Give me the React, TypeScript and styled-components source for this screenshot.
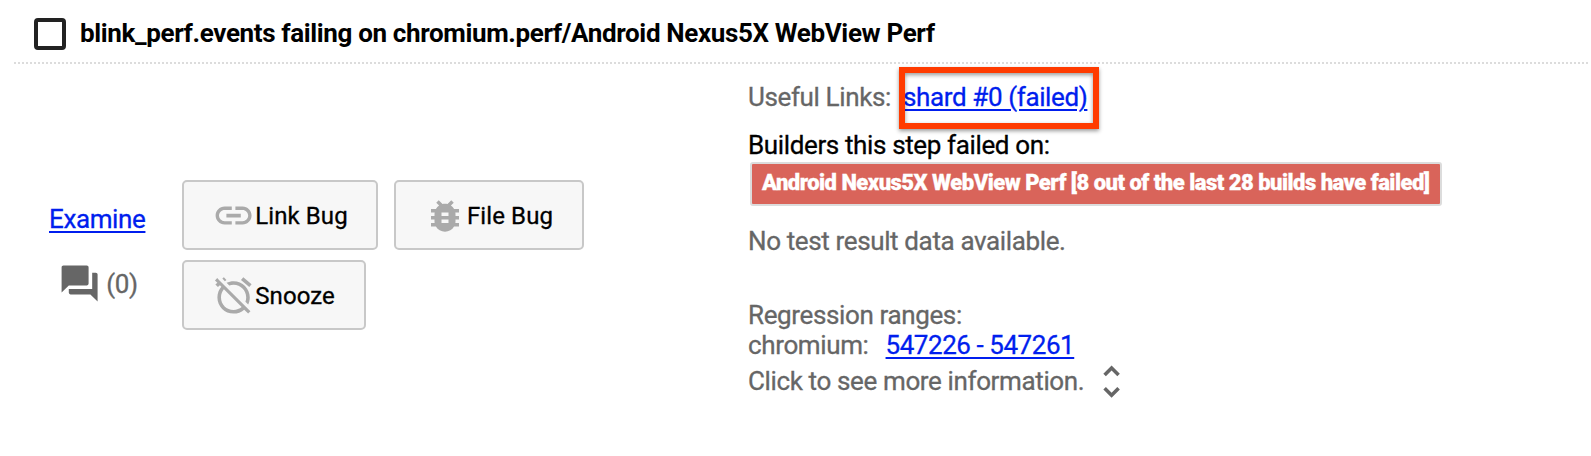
import React from "react";
import styled, { createGlobalStyle } from "styled-components";

const GlobalStyle = createGlobalStyle`
  *, *::before, *::after { box-sizing: border-box; }
  body {
    margin: 0;
    background: #fff;
    color: #666;
    font: 26px/30px Roboto, sans-serif;
    letter-spacing: -0.37px;
    -webkit-text-stroke: 0.3px currentColor;
    overflow: hidden;
  }
`;

const Page = styled.main`
  height: 456px;
  padding-left: 14px;
`;

const Header = styled.header`
  display: flex;
  align-items: flex-start;
  height: 64px;
  width: 1574px;
  padding: 18px 0 0 20px;
  background: repeating-linear-gradient(90deg, #dcdcdc 0 2px, transparent 2px 4px) 0 100% / 100% 2px no-repeat;
`;

const Checkbox = styled.span`
  width: 32px;
  height: 32px;
  border: 4px solid #222;
  border-radius: 4px;
`;

const Title = styled.h1`
  margin: 0 0 0 14px;
  font-size: 26px;
  line-height: 30px;
  font-weight: 700;
  color: #000;
  white-space: nowrap;
  letter-spacing: -0.36px;
  -webkit-text-stroke: 0;
`;

const Body = styled.div`
  display: grid;
  grid-template-columns: 168px 566px 1fr;
  align-items: start;
`;

const Summary = styled.div`
  padding: 140px 0 0 35px;
`;

const Link = styled.a<{ $spacing?: number }>`
  color: #001eee;
  letter-spacing: ${(p) => p.$spacing ?? -0.38}px;
  text-decoration: underline;
  text-decoration-thickness: 2px;
  text-underline-offset: 3px;
  cursor: pointer;
  white-space: nowrap;
`;

const Comments = styled.div`
  display: flex;
  align-items: center;
  gap: 5px;
  margin-top: 28px;
  padding-left: 9px;
  height: 44px;
`;

const Actions = styled.div`
  display: flex;
  flex-wrap: wrap;
  gap: 10px 16px;
  width: 420px;
  padding-top: 116px;
`;

const ActionButton = styled.button<{ $width: number; $gap?: number }>`
  display: flex;
  align-items: center;
  gap: ${(p) => p.$gap ?? 0}px;
  width: ${(p) => p.$width}px;
  height: 70px;
  padding: 1px 0 0 28px;
  border: 2px solid #c8c8c8;
  border-radius: 5px;
  background: #f7f7f7;
  color: #000;
  font: 24px/28px Roboto, sans-serif;
  letter-spacing: 0.1px;
  white-space: nowrap;
`;

const ButtonLabel = styled.span`
  padding-top: 1px;
`;

const Glyph = styled.svg<{ $size: number; $tone: string }>`
  flex: none;
  width: ${(p) => p.$size}px;
  height: ${(p) => p.$size}px;
  fill: ${(p) => p.$tone};
`;

const Details = styled.section`
  padding-top: 18px;
`;

const Line = styled.div<{ $top?: number; $dark?: boolean }>`
  display: flex;
  height: 30px;
  margin-top: ${(p) => p.$top ?? 0}px;
  color: ${(p) => (p.$dark ? "#000" : "#666")};
  white-space: nowrap;
`;

const Highlighted = styled.span`
  position: relative;
  margin-left: 12px;

  &::after {
    content: "";
    position: absolute;
    left: -4px;
    top: -15px;
    width: 200px;
    height: 62px;
    border: 6px solid #ff3b00;
    box-shadow: 0 2px 4px rgba(0, 0, 0, 0.4), inset 0 2px 4px rgba(0, 0, 0, 0.4);
    pointer-events: none;
  }
`;

const Builder = styled.div`
  width: 692px;
  height: 44px;
  margin: 2px 0 0 2px;
  padding: 6px 0 0 10px;
  border: 2px solid #dcdcdc;
  border-radius: 3px;
  background: #d9645a;
  color: #fff;
  font-size: 22px;
  line-height: 26px;
  font-weight: 900;
  letter-spacing: -0.51px;
  white-space: nowrap;
`;

const Range = styled.span`
  margin-left: 17px;
`;

const Toggle = styled.span`
  display: flex;
  align-items: center;
  margin: 2px 0 0 6px;
`;

const icons = {
  forum: "M21 6h-2v9H6v2c0 .55.45 1 1 1h11l4 4V7c0-.55-.45-1-1-1zm-4 6V3c0-.55-.45-1-1-1H3c-.55 0-1 .45-1 1v14l4-4h10c.55 0 1-.45 1-1z",
  link: "M3.9 12c0-1.71 1.39-3.1 3.1-3.1h4V7H7c-2.76 0-5 2.24-5 5s2.24 5 5 5h4v-1.9H7c-1.71 0-3.1-1.39-3.1-3.1zM8 13h8v-2H8v2zm9-6h-4v1.9h4c1.71 0 3.1 1.39 3.1 3.1s-1.39 3.1-3.1 3.1h-4V17h4c2.76 0 5-2.24 5-5s-2.24-5-5-5z",
  bug: "M20 8h-2.81c-.45-.78-1.07-1.45-1.82-1.96L17 4.41 15.59 3l-2.17 2.17C12.96 5.06 12.49 5 12 5c-.49 0-.96.06-1.41.17L8.41 3 7 4.41l1.62 1.63C7.88 6.55 7.26 7.22 6.81 8H4v2h2.09c-.05.33-.09.66-.09 1v1H4v2h2v1c0 .34.04.67.09 1H4v2h2.81c1.04 1.79 2.97 3 5.19 3s4.15-1.21 5.19-3H20v-2h-2.09c.05-.33.09-.66.09-1v-1h2v-2h-2v-1c0-.34-.04-.67-.09-1H20V8zm-6 8h-4v-2h4v2zm0-4h-4v-2h4v2z",
  snooze: "M12 6c3.87 0 7 3.13 7 7 0 .84-.16 1.65-.43 2.4l1.52 1.52c.58-1.19.91-2.51.91-3.92 0-4.97-4.03-9-9-9-1.41 0-2.73.33-3.92.91L9.6 6.43C10.35 6.16 11.16 6 12 6zm10-.28l-4.6-3.86-1.29 1.53 4.6 3.86L22 5.72zM2.92 2.29L1.65 3.57 2.98 4.9l-1.11.93 1.42 1.42 1.11-.94.8.8C3.83 8.69 3 10.75 3 13c0 4.97 4.02 9 9 9 2.25 0 4.31-.83 5.89-2.2l2.2 2.2 1.27-1.27L3.89 3.27l-.97-.98zm13.55 16.1C15.26 19.39 13.7 20 12 20c-3.87 0-7-3.13-7-7 0-1.7.61-3.26 1.61-4.47l9.86 9.86zM8.02 3.28L6.6 1.86l-.86.71 1.42 1.42.86-.71z",
  unfold: "M12 5.83L15.17 9l1.41-1.41L12 3 7.41 7.59 8.83 9 12 5.83zm0 12.34L8.83 15l-1.41 1.41L12 21l4.59-4.59L15.17 15 12 18.17z",
};

function Icon({ name, size = 43.2, tone = "#aaa" }: { name: keyof typeof icons; size?: number; tone?: string }) {
  return (
    <Glyph viewBox="0 0 24 24" $size={size} $tone={tone} aria-hidden="true">
      <path d={icons[name]} />
    </Glyph>
  );
}

export default function App() {
  return (
    <Page>
      <GlobalStyle />
      <Header>
        <Checkbox role="checkbox" aria-checked="false" />
        <Title>blink_perf.events failing on chromium.perf/Android Nexus5X WebView Perf</Title>
      </Header>
      <Body>
        <Summary>
          <Link>Examine</Link>
          <Comments>
            <Icon name="forum" tone="#666" />
            <span>(0)</span>
          </Comments>
        </Summary>
        <Actions>
          <ActionButton $width={196}>
            <Icon name="link" />
            <ButtonLabel>Link Bug</ButtonLabel>
          </ActionButton>
          <ActionButton $width={190} $gap={1}>
            <Icon name="bug" size={42} />
            <ButtonLabel>File Bug</ButtonLabel>
          </ActionButton>
          <ActionButton $width={184}>
            <Icon name="snooze" />
            <ButtonLabel>Snooze</ButtonLabel>
          </ActionButton>
        </Actions>
        <Details>
          <Line>
            <span>Useful Links:</span>
            <Highlighted>
              <Link>shard #0 (failed)</Link>
            </Highlighted>
          </Line>
          <Line $top={18} $dark>Builders this step failed on:</Line>
          <Builder>Android Nexus5X WebView Perf [8 out of the last 28 builds have failed]</Builder>
          <Line $top={20}>No test result data available.</Line>
          <Line $top={44}>Regression ranges:</Line>
          <Line>
            <span>chromium:</span>
            <Range>
              <Link $spacing={-0.45}>547226 - 547261</Link>
            </Range>
          </Line>
          <Line $top={6}>
            <span>Click to see more information.</span>
            <Toggle>
              <Icon name="unfold" tone="#666" />
            </Toggle>
          </Line>
        </Details>
      </Body>
    </Page>
  );
}
